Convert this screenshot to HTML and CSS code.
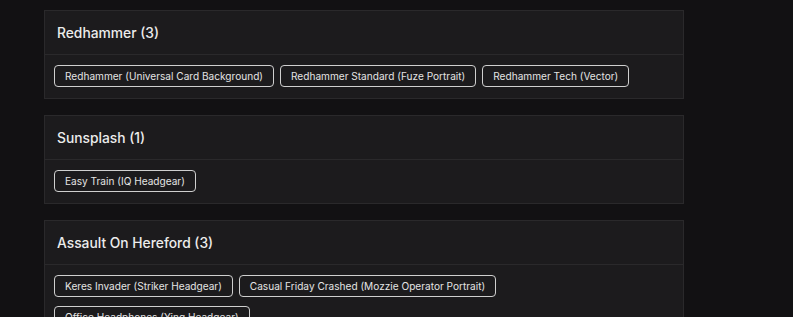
FILE: index.html
```html
<!DOCTYPE html>
<html lang="en">
<head>
<meta charset="utf-8">
<title>Bundles</title>
<link rel="stylesheet" href="styles.css">
</head>
<body>
<main class="list">
  <section class="card">
    <header class="card-head"><h2 class="card-title">Redhammer (3)</h2></header>
    <div class="card-body">
      <span class="tag">Redhammer (Universal Card Background)</span>
      <span class="tag">Redhammer Standard (Fuze Portrait)</span>
      <span class="tag">Redhammer Tech (Vector)</span>
    </div>
  </section>
  <section class="card">
    <header class="card-head"><h2 class="card-title">Sunsplash (1)</h2></header>
    <div class="card-body">
      <span class="tag">Easy Train (IQ Headgear)</span>
    </div>
  </section>
  <section class="card">
    <header class="card-head"><h2 class="card-title">Assault On Hereford (3)</h2></header>
    <div class="card-body">
      <span class="tag">Keres Invader (Striker Headgear)</span>
      <span class="tag">Casual Friday Crashed (Mozzie Operator Portrait)</span>
      <span class="tag">Office Headphones (Ying Headgear)</span>
    </div>
  </section>
</main>
</body>
</html>
```
FILE: styles.css
```css
html, body {
  margin: 0;
  padding: 0;
  background: #121113;
  font-family: Inter, "Open Sans", sans-serif;
  color: #e6e6e6;
}
.list {
  display: flex;
  flex-direction: column;
  gap: 16px;
  width: 640px;
  padding: 10px 0 0 44px;
}
.card {
  background: #1c1b1d;
  border: 1px solid #2a292b;
}
.card-head {
  height: 43px;
  display: flex;
  align-items: center;
  padding: 0 12px;
  border-bottom: 1px solid #2a292b;
}
.card-title {
  margin: 0;
  font-size: 13.8px;
  font-weight: 500;
  color: #ececec;
}
.card-body {
  display: flex;
  flex-wrap: wrap;
  column-gap: 6px;
  row-gap: 9px;
  padding: 10px 9px 11px;
}
.tag {
  display: inline-flex;
  align-items: center;
  height: 20px;
  padding: 0 10px;
  border: 1px solid #cfcfcf;
  border-radius: 4px;
  font-size: 10.1px;
  color: #e4e4e4;
  white-space: nowrap;
}
```
